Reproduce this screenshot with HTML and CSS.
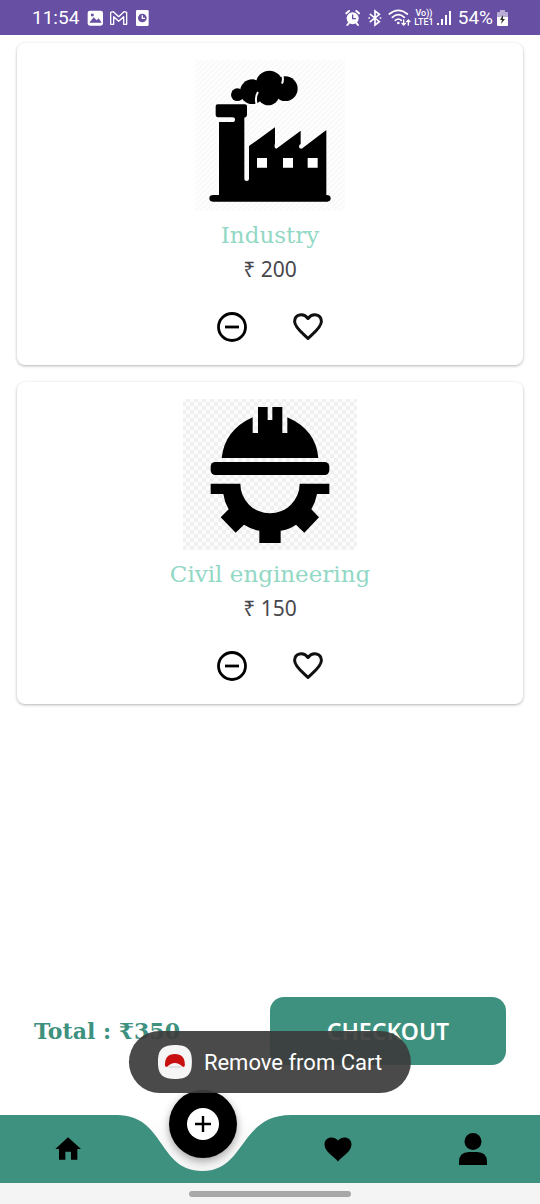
FILE: index.html
```html
<!DOCTYPE html>
<html lang="en">
<head>
<meta charset="utf-8">
<meta name="viewport" content="width=device-width, initial-scale=1">
<title>Cart</title>
<link rel="stylesheet" href="styles.css">
</head>
<body>
<div class="app">
  <header class="status">
    <div class="status-group">
      <span class="status-text">11:54</span>
      <svg class="notices" width="64" height="18" viewBox="264 26 192 54" aria-hidden="true">
        <rect x="266" y="31" width="46" height="45" rx="7" fill="#fff"/>
        <path d="M271 67l13-16 9 9 6-6 9 13zM276 40h8v8h-8z" fill="#674fa3"/>
        <path d="M335 72V36l8-2 16 15 16-15 8 2v36h-9V49l-15 14-15-14v23z" fill="none" stroke="#fff" stroke-width="4" stroke-linejoin="round"/>
        <rect x="411" y="29" width="38" height="48" rx="4" fill="#fff"/>
        <circle cx="430" cy="53" r="13" fill="#674fa3"/>
        <path d="M430 45v9h8" fill="none" stroke="#fff" stroke-width="4"/>
      </svg>
    </div>
    <div class="status-group status-group-end">
      <svg width="66" height="20" viewBox="76 24 198 60" fill="none" stroke="#fff" stroke-width="4" stroke-linecap="round" aria-hidden="true">
        <circle cx="99" cy="55" r="18" fill="#fff" stroke="none"/>
        <path d="M80 40l8-7M118 40l-8-7M87 70l-4 5M111 70l4 5" stroke-width="6"/>
        <path d="M99 45v11h8" stroke="#674fa3"/>
        <path d="M152 43l27 22-13 10V33l13 10-27 22M148 54h1M182 54h1" stroke-width="5"/>
        <path d="M209 42q27-22 54 0M218 52q18-16 36 0M227 61q9-8 18 0" stroke-width="5"/>
        <circle cx="236" cy="69" r="4" fill="#fff" stroke="none"/>
        <path d="M252 60v15m-5-5l5 5 5-5M266 75V60m-5 5l5-5 5 5" stroke-width="4"/>
      </svg>
      <span class="volte"><span>Vo))</span><span>LTE1</span></span>
      <svg class="signal" width="15" height="16" viewBox="0 0 15 16" fill="#fff" aria-hidden="true">
        <path d="M0 13h2v2H0zM4 9h2v6H4zM8 5h2v10H8zM12 1h2v14h-2z"/>
      </svg>
      <span class="status-text">54%</span>
      <svg width="13" height="18" viewBox="0 0 13 18" aria-hidden="true">
        <path d="M4 1h5v2h2q1 0 1 1v5H1V4q0-1 1-1h2z" fill="#b9add6"/>
        <path d="M1 8h11v8q0 1-1 1H2q-1 0-1-1z" fill="#fff"/>
        <path d="M7 6l-3 5h2l-1 4 4-5H7z" fill="#333"/>
      </svg>
    </div>
  </header>

  <main class="cart">
    <article class="card">
      <svg class="picture" width="150" height="151" viewBox="45 30 450 453" role="img" aria-label="Factory">
        <defs>
          <pattern id="stripes" width="16" height="16" patternUnits="userSpaceOnUse">
            <path d="M-2 18L18-2M-2 2l4-4M14 18l4-4" stroke="#f5f5f5" stroke-width="3"/>
          </pattern>
        </defs>
        <rect x="45" y="30" width="450" height="453" fill="#fefefe"/>
        <rect x="45" y="30" width="450" height="453" fill="url(#stripes)"/>
        <circle cx="172" cy="134" r="19"/>
        <circle cx="217" cy="125" r="37"/>
        <circle cx="268" cy="102" r="40"/>
        <circle cx="265" cy="134" r="32"/>
        <circle cx="316" cy="116" r="37"/>
        <path d="M230 162q-6-20 4-36M307 76q4 14-1 25" fill="none" stroke="#fff" stroke-width="6"/>
        <path d="M113 163h82q6 0 6 6v26q0 6-8 8v184q0 6 7 6t7-6V288l78-56v48q-4 16 4 16l73-54v40q-8 4-3 13l6 1 74-56v195q13 0 13 10 0 10-10 10H98q-10 0-10-10 0-10 12-10h17V216h40q8 0 8-7t-8-7h-44q-6-1-6-7v-26q0-6 6-6z"/>
        <path d="M231 324h30v29h-30zM309 324h30v29h-30zM383 324h30v29h-30z" fill="#fff"/>
      </svg>
      <h2 class="name">Industry</h2>
      <p class="price">₹ 200</p>
      <div class="actions">
        <button class="icon-button" type="button" aria-label="Remove Industry from cart">
          <svg width="32" height="32" viewBox="0 0 32 32" fill="none" stroke="#000" aria-hidden="true"><circle cx="16" cy="16" r="13.5" stroke-width="2.8"/><path d="M9 16h14" stroke-width="2.8"/></svg>
        </button>
        <button class="icon-button" type="button" aria-label="Add Industry to favourites">
          <svg width="32" height="32" viewBox="0 0 32 32" fill="none" stroke="#111" stroke-width="3" stroke-linejoin="round" aria-hidden="true"><path d="M16 27.500C11 22.500 2.600 16.500 2.600 10.500 2.600 3 11.500 1.500 16 7.500c4.500-6 13.400-4.500 13.400 3C29.400 16.500 21 22.500 16 27.500z"/></svg>
        </button>
      </div>
    </article>

    <article class="card">
      <svg class="picture" width="174" height="151" viewBox="39 27 522 453" role="img" aria-label="Hard hat and gear">
        <defs>
          <pattern id="checks" width="24" height="24" patternUnits="userSpaceOnUse">
            <path d="M0 0h12v12H0zM12 12h12v12H12z" fill="#f0f0f0"/>
          </pattern>
        </defs>
        <rect x="39" y="27" width="522" height="453" fill="#fcfcfc"/>
        <rect x="39" y="27" width="522" height="453" fill="url(#checks)"/>
        <path d="M248 82v47h16V51h29v39h14V51h30v78h15V82q86 38 93 122H155q9-84 93-122z"/>
        <rect x="122" y="216" width="356" height="39" rx="14"/>
        <path d="M122 281h89a89 89 0 0 0 178 0h89v31h-37q-4 24-17 46l23 24-44 46-25-24q-21 15-46 18v37h-64v-37q-24-4-46-18l-25 24-45-46 24-24q-13-22-16-46h-38z"/>
      </svg>
      <h2 class="name">Civil engineering</h2>
      <p class="price">₹ 150</p>
      <div class="actions">
        <button class="icon-button" type="button" aria-label="Remove Civil engineering from cart">
          <svg width="32" height="32" viewBox="0 0 32 32" fill="none" stroke="#000" aria-hidden="true"><circle cx="16" cy="16" r="13.5" stroke-width="2.8"/><path d="M9 16h14" stroke-width="2.8"/></svg>
        </button>
        <button class="icon-button" type="button" aria-label="Add Civil engineering to favourites">
          <svg width="32" height="32" viewBox="0 0 32 32" fill="none" stroke="#111" stroke-width="3" stroke-linejoin="round" aria-hidden="true"><path d="M16 27.500C11 22.500 2.600 16.500 2.600 10.500 2.600 3 11.500 1.500 16 7.500c4.500-6 13.400-4.500 13.400 3C29.400 16.500 21 22.500 16 27.500z"/></svg>
        </button>
      </div>
    </article>
  </main>

  <section class="summary">
    <p class="total">Total : ₹350</p>
    <button class="checkout" type="button">CHECKOUT</button>
  </section>

  <nav class="tabs">
    <svg class="tabs-shape" viewBox="0 0 540 68" preserveAspectRatio="none" aria-hidden="true">
      <path d="M0 0H117C165 0 158 56 202 56S239 0 291 0H540V68H0z" fill="#3d917e"/>
    </svg>
    <a class="tab" href="#home" aria-label="Home">
      <svg width="26" height="24" viewBox="162 473 78 72" aria-hidden="true"><path d="M201 474l39 35h-11v32h-19v-24h-17v24h-19v-32h-11z"/></svg>
    </a>
    <a class="tab" href="#add" aria-label="Add">
      <span class="fab"><svg width="34" height="34" viewBox="0 0 34 34" aria-hidden="true"><circle cx="17" cy="17" r="16" fill="#fff"/><path d="M17 9v16M9 17h16" stroke="#000" stroke-width="2.4"/></svg></span>
    </a>
    <a class="tab" href="#favourites" aria-label="Favourites">
      <svg width="28" height="26" viewBox="0 0 28 26" aria-hidden="true"><path d="M14 25.500C10 20.500 .5 15.500 .5 8.500 .5 .5 10-.5 14 4.500c4-5 13.500-4 13.500 4C27.500 15.500 18 20.500 14 25.500z"/></svg>
    </a>
    <a class="tab" href="#profile" aria-label="Profile">
      <svg width="28" height="32" viewBox="0 0 28 32" aria-hidden="true"><circle cx="14" cy="8.500" r="8.500"/><path d="M0 32v-3q0-10 10-10h8q10 0 10 10v3z"/></svg>
    </a>
  </nav>
  <div class="gesture"><span class="gesture-pill"></span></div>

  <div class="toast" role="status">
    <svg width="34" height="34" viewBox="0 0 34 34" aria-hidden="true">
      <path d="M17 0C29 0 34 4 34 17S29 34 17 34 0 30 0 17 5 0 17 0z" fill="#f5f5f5"/>
      <path d="M7 20Q7 9 17 9t10 11q0 2-2 2-4-4-8-4t-8 4q-2 0-2-2z" fill="#c81010"/>
      <path d="M11 22h12" stroke="#ccc"/>
    </svg>
    <span>Remove from Cart</span>
  </div>
</div>
</body>
</html>
```
FILE: styles.css
```css
* {
  box-sizing: border-box;
}

body {
  margin: 0;
  background: #fff;
  font-family: "Noto Sans", sans-serif;
}

h2,
p {
  margin: 0;
}

button {
  border: 0;
  padding: 0;
  font: inherit;
  cursor: pointer;
}

svg {
  display: block;
  flex: none;
}

.app {
  position: relative;
  display: flex;
  flex-direction: column;
  min-height: 100vh;
}

.status {
  display: flex;
  justify-content: space-between;
  align-items: center;
  height: 35px;
  padding: 0 31px 0 32px;
  background: #674fa3;
  color: #fff;
  font-family: Roboto, sans-serif;
}

.status-group {
  display: flex;
  align-items: center;
  gap: 4px;
}

.status-group-end {
  gap: 3px;
}

.status-text {
  font-size: 19px;
  line-height: 24px;
}

.notices {
  margin-left: 4px;
}

.volte {
  display: flex;
  flex-direction: column;
  align-items: center;
  font-size: 9px;
  font-weight: 500;
  line-height: 9px;
}

.signal {
  margin-right: 3px;
}

.cart {
  flex: 1;
  display: flex;
  flex-direction: column;
  gap: 17px;
  padding: 8px 17px;
}

.card {
  display: flex;
  flex-direction: column;
  align-items: center;
  padding: 17px 16px 22px;
  border-radius: 8px;
  background: #fff;
  box-shadow: 0 1px 3px rgba(0, 0, 0, 0.3);
}

.name {
  margin-top: 8px;
  color: #92d8c5;
  font-family: "DejaVu Serif", serif;
  font-size: 23px;
  font-weight: 400;
  line-height: 32px;
}

.price {
  margin-top: 2px;
  color: #49474e;
  font-size: 21px;
  line-height: 32px;
}

.actions {
  display: flex;
  gap: 44px;
  margin-top: 26px;
}

.icon-button {
  background: none;
}

.summary {
  display: grid;
  grid-template-columns: 1fr 1fr;
  align-items: center;
  padding: 0 34px 50px;
}

.total {
  color: #3d917e;
  font-family: "DejaVu Serif", serif;
  font-size: 22px;
  font-weight: 700;
  line-height: 32px;
  white-space: nowrap;
}

.checkout {
  height: 68px;
  border-radius: 14px;
  background: #3d917e;
  color: #fff;
  font-size: 23px;
  font-weight: 600;
}

.tabs {
  position: relative;
  display: grid;
  grid-template-columns: repeat(4, 1fr);
  height: 68px;
  background: linear-gradient(#fff, #f2f2f2);
}

.tabs-shape {
  position: absolute;
  inset: 0;
  width: 100%;
  height: 100%;
}

.tab {
  position: relative;
  display: flex;
  justify-content: center;
  align-items: center;
}

.fab {
  position: absolute;
  bottom: 25px;
  display: flex;
  justify-content: center;
  align-items: center;
  width: 68px;
  height: 68px;
  border-radius: 50%;
  background: #000;
  box-shadow: 0 3px 8px rgba(0, 0, 0, 0.35);
}

.gesture {
  display: flex;
  justify-content: center;
  align-items: center;
  height: 21px;
  background: #f4f4f4;
}

.gesture-pill {
  width: 30%;
  height: 6px;
  border-radius: 3px;
  background: #a8a8a8;
}

.toast {
  position: absolute;
  bottom: 111px;
  left: 50%;
  transform: translateX(-50%);
  display: flex;
  align-items: center;
  gap: 12px;
  height: 62px;
  padding: 0 29px;
  border-radius: 31px;
  background: rgba(60, 60, 60, 0.93);
  color: #fff;
  font-family: Roboto, sans-serif;
  font-size: 22px;
  white-space: nowrap;
}
```
